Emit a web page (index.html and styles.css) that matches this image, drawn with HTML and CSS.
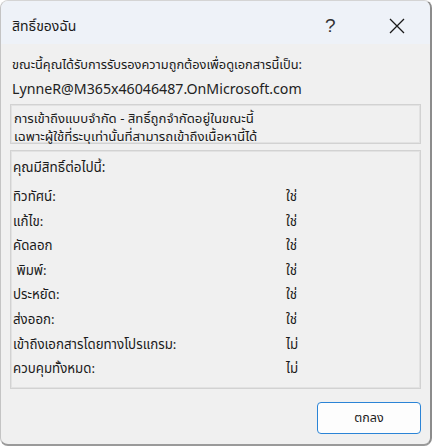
FILE: index.html
```html
<!DOCTYPE html>
<html lang="th">
<head>
<meta charset="utf-8">
<title>สิทธิ์ของฉัน</title>
<link rel="stylesheet" href="styles.css">
</head>
<body>
<div class="window">
  <div class="titlebar">
    <div class="title">สิทธิ์ของฉัน</div>
    <div class="help">?</div>
    <div class="close">
      <svg width="16" height="16" viewBox="0 0 16 16"><path d="M1 1 L15 15 M15 1 L1 15" stroke="#1a1a1a" stroke-width="1.3" fill="none"/></svg>
    </div>
  </div>
  <div class="content">
    <div class="auth">ขณะนี้คุณได้รับการรับรองความถูกต้องเพื่อดูเอกสารนี้เป็น:</div>
    <div class="email">LynneR@M365x46046487.OnMicrosoft.com</div>
    <div class="box notice">
      <div>การเข้าถึงแบบจำกัด - สิทธิ์ถูกจำกัดอยู่ในขณะนี้</div>
      <div>เฉพาะผู้ใช้ที่ระบุเท่านั้นที่สามารถเข้าถึงเนื้อหานี้ได้</div>
    </div>
    <div class="box perms">
      <div class="perm-head">คุณมีสิทธิ์ต่อไปนี้:</div>
      <div class="row"><span class="label">ทิวทัศน์:</span><span class="val">ใช่</span></div>
      <div class="row"><span class="label">แก้ไข:</span><span class="val">ใช่</span></div>
      <div class="row"><span class="label">คัดลอก</span><span class="val">ใช่</span></div>
      <div class="row"><span class="label">&nbsp;พิมพ์:</span><span class="val">ใช่</span></div>
      <div class="row"><span class="label">ประหยัด:</span><span class="val">ใช่</span></div>
      <div class="row"><span class="label">ส่งออก:</span><span class="val">ใช่</span></div>
      <div class="row"><span class="label">เข้าถึงเอกสารโดยทางโปรแกรม:</span><span class="val">ไม่</span></div>
      <div class="row"><span class="label">ควบคุมทั้งหมด:</span><span class="val">ไม่</span></div>
    </div>
    <div class="footer">
      <button class="ok">ตกลง</button>
    </div>
  </div>
</div>
</body>
</html>
```

FILE: styles.css
```css
html, body {
  margin: 0;
  padding: 0;
  background: #ffffff;
}
body {
  font-family: "Noto Sans", "Noto Sans Thai", "DejaVu Sans", sans-serif;
  color: #1a1a1a;
}
.window {
  box-sizing: border-box;
  width: 432px;
  height: 446px;
  background: #f0f0f0;
  border-radius: 8px;
  border-top: 1px solid #d4d4d4;
  border-left: 1px solid #c4c4c4;
  border-right: 2px solid #8c8c8c;
  border-bottom: 2px solid #9a9a9a;
  overflow: hidden;
  display: flex;
  flex-direction: column;
}
.titlebar {
  height: 43px;
  box-sizing: border-box;
  padding-top: 7px;
  flex: none;
  background: #eef2f8;
  display: flex;
  align-items: center;
  padding-left: 11px;
}
.title {
  font-size: 14px;
  flex: 1;
}
.help {
  font-family: "Liberation Sans", sans-serif;
  font-size: 19px;
  font-weight: 300;
  color: #333;
  width: 16px;
  margin-right: 48px;
}
.close {
  width: 16px;
  height: 16px;
  margin-right: 25px;
  display: flex;
}
.content {
  flex: 1;
  display: flex;
  flex-direction: column;
  padding: 0 9px 0 9px;
}
.auth {
  font-size: 12.8px;
  margin: 11px 0 0 2px;
  height: 20px;
}
.email {
  font-size: 14.2px;
  margin: 4px 0 0 2px;
  height: 23px;
  color: #222;
}
.box {
  border: 1px solid #d2d2d2;
  box-shadow: inset 0 0 0 1px #e2e2e2;
}
.notice {
  height: 40px;
  box-sizing: border-box;
  padding: 4px 0 0 3px;
  font-size: 13.2px;
  line-height: 18px;
  margin-top: 2px;
}
.perms {
  margin-top: 6px;
  height: 239px;
  box-sizing: border-box;
  padding: 3px 0 0 2px;
  font-size: 13.3px;
}
.perm-head {
  height: 30px;
  line-height: 26px;
  font-size: 13.5px;
}
.row {
  display: flex;
  height: 24.6px;
  line-height: 24.6px;
}
.label {
  width: 273px;
}
.val {
  flex: none;
}
.footer {
  flex: 1;
  display: flex;
  justify-content: flex-end;
  align-items: flex-start;
  padding-top: 13px;
}
.ok {
  width: 104px;
  height: 32px;
  margin-right: 0;
  background: #fdfdfd;
  border: 1px solid #2b84d6;
  border-radius: 4px;
  font-family: inherit;
  font-size: 12.5px;
  color: #1a1a1a;
}
```
